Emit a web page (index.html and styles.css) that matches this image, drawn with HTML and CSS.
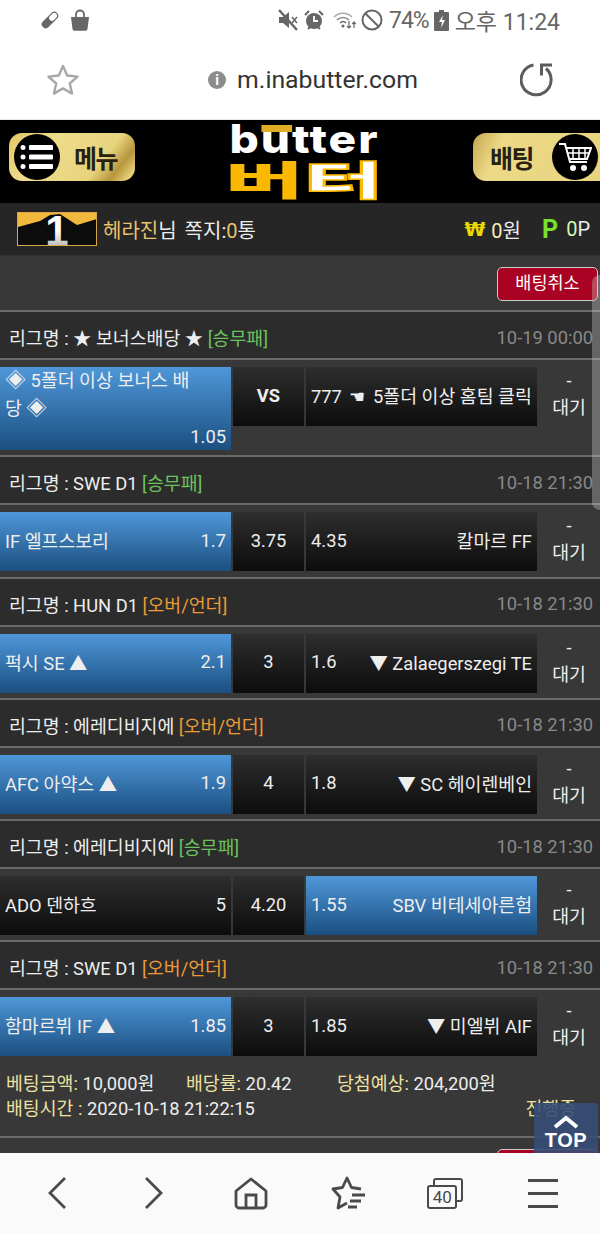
FILE: index.html
```html
<!DOCTYPE html>
<html lang="ko">
<head>
    <meta charset="UTF-8">
    <meta name="viewport" content="width=device-width, initial-scale=1.0">
    <title>butter</title>
    <link rel="stylesheet" href="styles.css">
</head>
<body>
    <div class="phone">
        <!-- Status bar -->
        <div class="status-bar">
            <div class="status-left">
                <svg width="20" height="20" viewBox="0 0 20 20"><g transform="rotate(-45 10 10)"><rect x="0" y="6" width="20" height="8" rx="4" fill="#666"/><rect x="10" y="7.2" width="8.8" height="5.6" rx="2.8" fill="#fff"/></g></svg>
                <svg width="20" height="22" viewBox="0 0 20 22"><path d="M1 8h18l-1.5 12a2 2 0 0 1-2 1.8h-11a2 2 0 0 1-2-1.8z" fill="#666"/><path d="M6 9V5.500a4 4 0 0 1 8 0V9" fill="none" stroke="#666" stroke-width="1.800"/></svg>
            </div>
            <div class="status-right">
                <svg width="20" height="22" viewBox="0 0 20 22"><path d="M1 8h4l6-5v16l-6-5H1z" fill="#666"/><path d="M14 8l5 6M19 8l-5 6" stroke="#666" stroke-width="1.500"/><path d="M1 1l18 20" stroke="#666" stroke-width="2.500"/></svg>
                <svg width="20" height="22" viewBox="0 0 20 22"><circle cx="10" cy="12" r="8" fill="#666"/><path d="M10 7v5h4" fill="none" stroke="#fff" stroke-width="1.800"/><path d="M1 6l4-4M19 6l-4-4M4 20l2-2M16 20l-2-2" stroke="#666" stroke-width="2"/></svg>
                <svg class="wifi-icon" width="24" height="20" viewBox="0 0 24 20"><g fill="none" stroke="#aaa" stroke-width="1.500"><path d="M1 7c5-5 13-5 18 0"/></g><path d="M4 10c3.500-3.500 8.500-3.500 12 0" fill="none" stroke="#888" stroke-width="1.500"/><path d="M7 13c2-2 4-2 6 0" fill="none" stroke="#666" stroke-width="1.500"/><circle cx="10" cy="16" r="1.500" fill="#666"/><path d="M16 11v7M14 16l2 2 2-2M21 18v-6M19.300 14l1.700-2 1.700 2" fill="none" stroke="#666" stroke-width="1.200"/></svg>
                <svg class="no-icon" width="22" height="22" viewBox="0 0 22 22"><circle cx="11" cy="11" r="9.500" fill="none" stroke="#666" stroke-width="2"/><path d="M4.500 4.500l13 13" stroke="#666" stroke-width="2"/></svg>
                <span class="pct">74%</span>
                <svg width="15" height="21" viewBox="0 0 15 21"><path d="M5 0h5v2h4a1 1 0 0 1 1 1v17a1 1 0 0 1-1 1H1a1 1 0 0 1-1-1V3a1 1 0 0 1 1-1h4z" fill="#666"/><path d="M9 5l-4 7h3l-1 6 4-8H8z" fill="#fff"/></svg>
                <span class="clock">오후 11:24</span>
            </div>
        </div>

        <!-- Address bar -->
        <div class="url-bar">
            <svg class="url-star" width="34" height="34" viewBox="0 0 34 34"><path d="M17 3l4.200 9.500 10.300 1.100-7.700 6.900 2.200 10.100L17 25.400l-9 5.200 2.200-10.100-7.700-6.900 10.300-1.100z" fill="none" stroke="#a8a8a8" stroke-width="2.400" stroke-linejoin="round"/></svg>
            <div class="url">
                <span class="info-dot">i</span>
                <span class="url-text">m.inabutter.com</span>
            </div>
            <svg class="url-reload" width="34" height="34" viewBox="0 0 34 34"><path d="M26 5.500A15 15 0 1 1 13.500 2" fill="none" stroke="#5c5c5c" stroke-width="3"/><path d="M32 2H21.500v10.500" fill="none" stroke="#5c5c5c" stroke-width="3"/></svg>
        </div>

        <div class="main">
            <!-- Site header -->
            <div class="site-header">
                <div class="gold-btn">
                    <span class="gold-circle">
                        <svg width="34" height="28" viewBox="0 0 34 28"><g fill="#fff"><rect x="9" y="2" width="24" height="5" rx="1"/><rect x="9" y="11.500" width="24" height="5" rx="1"/><rect x="9" y="21" width="24" height="5" rx="1"/><circle cx="3" cy="4.500" r="2.500"/><circle cx="3" cy="14" r="2.500"/><circle cx="3" cy="23.500" r="2.500"/></g></svg>
                    </span>
                    <span class="gold-label">메뉴</span>
                </div>
                <div class="logo">
                    <div class="logo-en">b<span class="logo-u">u</span>tter</div>
                    <div class="logo-ko">버<span class="logo-te">터</span></div>
                </div>
                <div class="gold-btn gold-btn-right">
                    <span class="gold-label">배팅</span>
                    <span class="gold-circle">
                        <svg width="34" height="32" viewBox="0 0 34 32"><path d="M1 3h6l5 18h17" fill="none" stroke="#fff" stroke-width="2"/><path d="M8 7h25l-4 11H11" fill="none" stroke="#fff" stroke-width="2"/><path d="M15 8v9M21 8v9M27 8v9M10 12h21" stroke="#fff" stroke-width="1.500"/><circle cx="15" cy="27" r="3" fill="#fff"/><circle cx="26" cy="27" r="3" fill="#fff"/></svg>
                    </span>
                </div>
            </div>

            <!-- User bar -->
            <div class="user-bar">
                <div class="user-left">
                    <svg class="level" width="80" height="34" viewBox="0 0 80 34">
                        <defs><linearGradient id="levelNum" x1="0" y1="0" x2="0" y2="1"><stop offset="0.5" stop-color="#fff"/><stop offset="1" stop-color="#999"/></linearGradient></defs>
                        <rect x="0" y="0" width="80" height="34" fill="#f0b93e"/>
                        <path d="M1 15l22-6 10-6 10-1 17 11 20-6v26H1z" fill="#0c0c0c"/>
                        <text x="40" y="33" text-anchor="middle" class="level-num" fill="url(#levelNum)">1</text>
                        <rect x="0.500" y="0.500" width="79" height="33" fill="none" stroke="#d9a648"/>
                    </svg>
                    <span class="name">헤라진</span><span>님</span>
                    <span class="note">쪽지:<em>0</em>통</span>
                </div>
                <div class="user-right">
                    <span class="won-sign">₩</span><span><em class="won-num">0</em>원</span>
                    <span class="point-sign">P</span><span><em class="point-num">0</em>P</span>
                </div>
            </div>

            <div class="bet-list">
                <div class="actions"><span class="cancel-btn">배팅취소</span></div>

                <div class="game">
                    <div class="league">
                        <span>리그명 : ★ 보너스배당 ★ <b class="type-green">[승무패]</b></span>
                        <span class="time">10-19 00:00</span>
                    </div>
                    <div class="match">
                        <div class="cell cell-home picked wrap">
                            <div class="wrap-title"><i class="dia">◈</i> 5폴더 이상 보너스 배당 <i class="dia">◈</i></div>
                            <div class="wrap-odd">1.05</div>
                        </div>
                        <div class="cell cell-mid vs">VS</div>
                        <div class="cell cell-away"><span class="one-line">777 <i class="hand">☚</i> 5폴더 이상 홈팀 클릭</span></div>
                        <div class="state">-<br>대기</div>
                    </div>
                </div>

                <div class="game">
                    <div class="league">
                        <span>리그명 : SWE D1 <b class="type-green">[승무패]</b></span>
                        <span class="time">10-18 21:30</span>
                    </div>
                    <div class="match">
                        <div class="cell cell-home picked"><span>IF 엘프스보리</span><span>1.7</span></div>
                        <div class="cell cell-mid">3.75</div>
                        <div class="cell cell-away"><span>4.35</span><span>칼마르 FF</span></div>
                        <div class="state">-<br>대기</div>
                    </div>
                </div>

                <div class="game">
                    <div class="league">
                        <span>리그명 : HUN D1 <b class="type-orange">[오버/언더]</b></span>
                        <span class="time">10-18 21:30</span>
                    </div>
                    <div class="match">
                        <div class="cell cell-home picked"><span>퍽시 SE ▲</span><span>2.1</span></div>
                        <div class="cell cell-mid">3</div>
                        <div class="cell cell-away"><span>1.6</span><span>▼ Zalaegerszegi TE</span></div>
                        <div class="state">-<br>대기</div>
                    </div>
                </div>

                <div class="game">
                    <div class="league">
                        <span>리그명 : 에레디비지에 <b class="type-orange">[오버/언더]</b></span>
                        <span class="time">10-18 21:30</span>
                    </div>
                    <div class="match">
                        <div class="cell cell-home picked"><span>AFC 아약스 ▲</span><span>1.9</span></div>
                        <div class="cell cell-mid">4</div>
                        <div class="cell cell-away"><span>1.8</span><span>▼ SC 헤이렌베인</span></div>
                        <div class="state">-<br>대기</div>
                    </div>
                </div>

                <div class="game">
                    <div class="league">
                        <span>리그명 : 에레디비지에 <b class="type-green">[승무패]</b></span>
                        <span class="time">10-18 21:30</span>
                    </div>
                    <div class="match">
                        <div class="cell cell-home"><span>ADO 덴하흐</span><span>5</span></div>
                        <div class="cell cell-mid">4.20</div>
                        <div class="cell cell-away picked"><span>1.55</span><span>SBV 비테세아른험</span></div>
                        <div class="state">-<br>대기</div>
                    </div>
                </div>

                <div class="game">
                    <div class="league">
                        <span>리그명 : SWE D1 <b class="type-orange">[오버/언더]</b></span>
                        <span class="time">10-18 21:30</span>
                    </div>
                    <div class="match">
                        <div class="cell cell-home picked"><span>함마르뷔 IF ▲</span><span>1.85</span></div>
                        <div class="cell cell-mid">3</div>
                        <div class="cell cell-away"><span>1.85</span><span>▼ 미엘뷔 AIF</span></div>
                        <div class="state">-<br>대기</div>
                    </div>
                </div>

                <div class="bet-info">
                    <div class="info-line">
                        <span class="info-a"><em>베팅금액:</em> 10,000원</span>
                        <span class="info-b"><em>배당률:</em> 20.42</span>
                        <span><em>당첨예상:</em> 204,200원</span>
                    </div>
                    <div class="info-line info-second">
                        <span><em>배팅시간 :</em> 2020-10-18 21:22:15</span>
                        <em>진행중</em>
                    </div>
                </div>

                <div class="game-end"></div>
                <div class="actions"><span class="cancel-btn">배팅취소</span></div>
            </div>

            <div class="scroll-thumb"></div>
            <div class="top-btn">
                <svg width="28" height="14" viewBox="0 0 28 14"><path d="M3 12L14 3l11 9" fill="none" stroke="#fff" stroke-width="4"/></svg>
                <span>TOP</span>
            </div>
        </div>

        <!-- Browser toolbar -->
        <div class="tool-bar">
            <svg width="20" height="34" viewBox="0 0 20 34"><path d="M18 2L3 17l15 15" fill="none" stroke="#4a4a4a" stroke-width="2.800"/></svg>
            <svg width="20" height="34" viewBox="0 0 20 34"><path d="M2 2l15 15L2 32" fill="none" stroke="#4a4a4a" stroke-width="2.800"/></svg>
            <svg width="34" height="33" viewBox="0 0 34 33"><path d="M2 14L17 2l15 12v14a3 3 0 0 1-3 3H5a3 3 0 0 1-3-3z" fill="none" stroke="#4a4a4a" stroke-width="2.800" stroke-linejoin="round"/><path d="M12 31V18h10v13" fill="none" stroke="#4a4a4a" stroke-width="2.800"/></svg>
            <svg width="34" height="34" viewBox="0 0 34 34"><path d="M30 13l-9.500-1.500L16 2l-4.500 9.500L2 13l7 8-2 11 9-5" fill="none" stroke="#4a4a4a" stroke-width="2.800" stroke-linejoin="round"/><path d="M21 19h13M19 25h11M17 31h9" stroke="#4a4a4a" stroke-width="2.800"/></svg>
            <div class="tabs">
                <span class="tabs-back"></span>
                <span class="tabs-front">40</span>
            </div>
            <div class="burger"><span></span><span></span><span></span></div>
        </div>
    </div>
</body>
</html>
```
FILE: styles.css
```css
* {
    box-sizing: border-box;
}
html, body {
    margin: 0;
    padding: 0;
}
body {
    font-family: Roboto, "Noto Sans CJK KR", sans-serif;
    font-size: 18.33px;
    color: #eee;
    background-color: #fff;
}
em, i {
    font-style: normal;
}
b {
    font-weight: normal;
}
.phone {
    width: 600px;
    height: 1233px;
    display: flex;
    flex-direction: column;
    overflow: hidden;
}
.status-bar {
    height: 40px;
    flex: none;
    display: flex;
    justify-content: space-between;
    align-items: center;
    padding: 0 40px;
    color: #666;
    font-size: 23px;
    background-color: #fff;
}
.status-left, .status-right {
    display: flex;
    align-items: center;
}
.status-left {
    gap: 10px;
}
.status-right {
    gap: 6px;
}
.pct {
    letter-spacing: -1px;
    margin-right: -1px;
}
.wifi-icon {
    margin-left: 3px;
}
.no-icon {
    margin-left: -2px;
}
.url-bar {
    height: 80px;
    flex: none;
    display: flex;
    justify-content: space-between;
    align-items: center;
    padding: 0 46px;
    background-color: #fff;
    border-bottom: 1px solid #e8e8e8;
}
.url {
    display: flex;
    align-items: center;
    gap: 11px;
    margin-left: 26px;
}
.info-dot {
    width: 18px;
    height: 18px;
    border-radius: 50%;
    background-color: #8c8c8c;
    color: #fff;
    font-size: 14px;
    font-weight: bold;
    line-height: 18px;
    text-align: center;
}
.url-text {
    color: #333;
    font-size: 24.8px;
}
.main {
    flex: 1;
    min-height: 0;
    position: relative;
    overflow: hidden;
    background-color: #383838;
}
.site-header {
    height: 83px;
    display: flex;
    justify-content: space-between;
    align-items: flex-start;
    padding: 13px 0 0 9px;
    background-color: #000;
}
.gold-btn {
    width: 126px;
    height: 48px;
    display: flex;
    align-items: center;
    justify-content: space-between;
    padding: 0 18px 0 5px;
    border-radius: 13px;
    color: #26220f;
    background: linear-gradient(128deg, #e2c768 0%, #efdc8c 30%, #e8d47e 70%, #b8963c 84%, #e3cd76 94%);
}
.gold-btn-right {
    width: 127px;
    padding: 0 2px 0 17px;
    border-radius: 13px 0 0 13px;
    background: linear-gradient(115deg, #c5a750 0%, #ecd987 22%, #e8d47e 100%);
}
.gold-circle {
    width: 46px;
    height: 46px;
    border-radius: 50%;
    background-color: #000;
    display: flex;
    align-items: center;
    justify-content: center;
}
.gold-label {
    font-size: 25px;
    font-weight: bold;
    letter-spacing: -1.5px;
}
.logo {
    width: 148px;
    margin-top: -13px;
    display: flex;
    flex-direction: column;
    align-items: center;
}
.logo-en {
    font-family: Inter, sans-serif;
    font-size: 39px;
    font-weight: 800;
    line-height: 34px;
    padding-top: 2px;
    letter-spacing: 1.6px;
    color: #fff;
    transform: scaleX(1.18);
}
.logo-u {
    position: relative;
}
.logo-u::before {
    content: "";
    position: absolute;
    left: 1px;
    right: 0;
    top: 10px;
    height: 7px;
    background-color: #e0ab25;
}
.logo-ko {
    font-family: "Noto Sans CJK KR", sans-serif;
    font-size: 40px;
    font-weight: 900;
    line-height: 40px;
    margin-top: 2px;
    color: #fbb800;
    transform: scaleX(2.15);
    white-space: nowrap;
}
.logo-te {
    color: #fff;
    -webkit-text-stroke: 1.5px #fbb800;
}
.user-bar {
    height: 53px;
    display: flex;
    justify-content: space-between;
    align-items: center;
    padding: 0 10px 0 17px;
    font-size: 20px;
    background-color: #262626;
    border-bottom: 1px solid #333;
}
.user-left, .user-right {
    display: flex;
    align-items: center;
}
.level {
    margin-right: 6px;
}
.level-num {
    font-family: "Liberation Sans", sans-serif;
    font-size: 42px;
    font-weight: bold;
}
.name {
    color: #e9c46a;
}
.note {
    margin-left: 8px;
}
.note em {
    color: #e9c46a;
}
.won-sign {
    font-family: "DejaVu Sans", sans-serif;
    color: #e8d800;
    font-weight: bold;
    font-size: 19px;
    margin-right: 6px;
}
.won-num {
    color: #f5efb0;
}
.point-sign {
    color: #7be02c;
    font-weight: bold;
    font-size: 25px;
    margin: 0 8px 0 21px;
}
.point-num {
    color: #d5f5b0;
}
.actions {
    display: flex;
    justify-content: flex-end;
    padding: 11px 2px 9px 0;
}
.cancel-btn {
    width: 101px;
    height: 34px;
    line-height: 30px;
    text-align: center;
    font-size: 17.5px;
    color: #fff;
    background-color: #aa0222;
    border: 1px solid #ccc;
    border-radius: 5px;
}
.league {
    height: 50px;
    display: flex;
    justify-content: space-between;
    align-items: center;
    padding: 4px 7px 0 9px;
    border-top: 2px solid #6a6a6a;
    border-bottom: 2px solid #6a6a6a;
    background-color: #2c2c2c;
}
.time {
    color: #888;
}
.type-green {
    color: #6cc35c;
}
.type-orange {
    color: #eb9a36;
}
.match {
    display: grid;
    grid-template-columns: 231px 71px 231px 60px;
    column-gap: 2px;
    align-items: start;
    padding: 7px 0 5.25px;
}
.cell {
    min-height: 59px;
    display: flex;
    justify-content: space-between;
    align-items: center;
    padding: 0 5px 3px;
    background: linear-gradient(#2e2e2e, #0c0c0c);
}
.cell-mid {
    justify-content: center;
}
.picked {
    background: linear-gradient(#4f97d9, #1b4f80);
}
.wrap {
    display: block;
    padding-bottom: 0;
    line-height: 28px;
}
.wrap-title {
    padding-right: 36px;
}
.wrap-odd {
    text-align: right;
    line-height: 27px;
}
.dia {
    font-size: 21px;
    line-height: 20px;
}
.vs {
    font-weight: bold;
}
.one-line {
    white-space: nowrap;
}
.hand {
    font-size: 18px;
    margin: 0 3px;
}
.state {
    text-align: center;
    line-height: 27px;
}
.bet-info {
    padding: 9px 24px 0 6px;
    height: 74px;
    color: #eee;
}
.bet-info em {
    color: #ede1a0;
}
.info-line {
    display: flex;
    line-height: 25px;
}
.info-a {
    width: 180px;
}
.info-b {
    width: 151px;
}
.info-second {
    justify-content: space-between;
}
.game-end {
    height: 2px;
    background-color: #6a6a6a;
}
.scroll-thumb {
    position: absolute;
    right: 0;
    top: 155px;
    width: 8px;
    height: 235px;
    border-radius: 8px 0 0 8px;
    background-color: rgba(210, 210, 210, 0.35);
}
.top-btn {
    position: absolute;
    right: 2px;
    bottom: 0;
    width: 64px;
    height: 50px;
    padding-top: 12px;
    display: flex;
    flex-direction: column;
    align-items: center;
    border-radius: 3px 3px 0 0;
    background-color: rgba(54, 78, 118, 0.9);
    color: #fff;
    font-family: "Liberation Sans", sans-serif;
    font-size: 20px;
    font-weight: bold;
    line-height: 22px;
    letter-spacing: 0.5px;
}
.tool-bar {
    height: 80px;
    flex: none;
    display: grid;
    grid-template-columns: repeat(6, 97.2px);
    justify-items: center;
    align-items: center;
    padding-left: 8px;
    background-color: #fafafa;
}
.tabs {
    width: 36px;
    height: 31px;
    position: relative;
}
.tabs-back {
    position: absolute;
    right: 0;
    top: 0;
    width: 30px;
    height: 24px;
    border: 2.5px solid #4a4a4a;
    border-radius: 3px;
}
.tabs-front {
    position: absolute;
    left: 0;
    bottom: 0;
    width: 30px;
    height: 24px;
    border: 2.5px solid #4a4a4a;
    border-radius: 3px;
    background-color: #fafafa;
    color: #4a4a4a;
    font-size: 17px;
    line-height: 20px;
    text-align: center;
}
.burger {
    width: 30px;
    display: flex;
    flex-direction: column;
    gap: 10px;
}
.burger span {
    height: 3px;
    background-color: #4a4a4a;
}
```
